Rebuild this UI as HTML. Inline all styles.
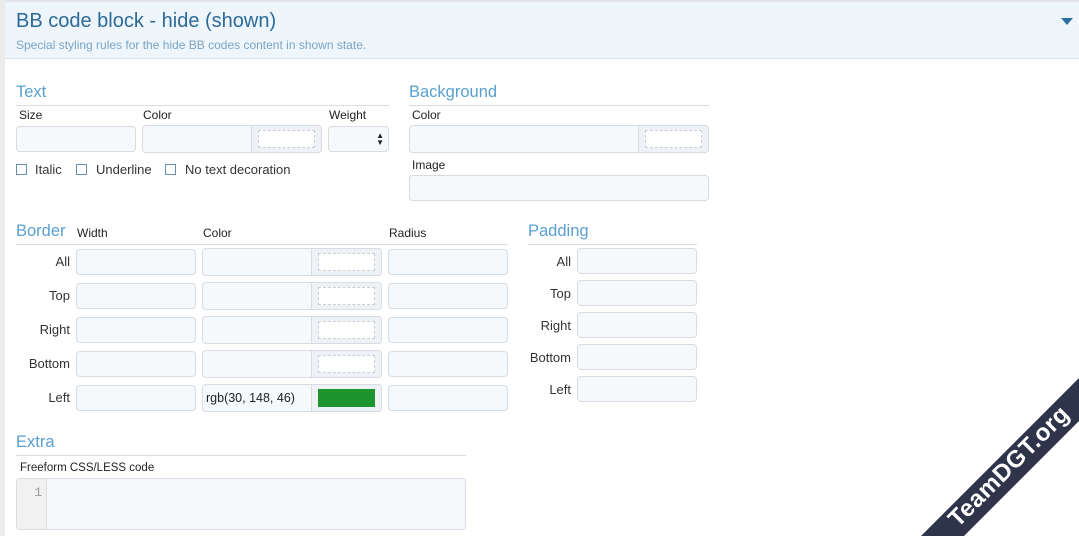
<!DOCTYPE html>
<html style="width:1079px;height:536px;overflow:hidden"><head><meta charset="utf-8"><style>
*{box-sizing:border-box;margin:0;padding:0}
body{width:1079px;height:536px;overflow:hidden;background:#fff;font-family:"Liberation Sans",sans-serif;position:relative;color:#222}
.a{position:absolute}
.hd{left:5px;top:0;width:1074px;height:59px;background:#eef5fb;border-top:2px solid #e3e5e8;border-bottom:1px solid #dbe4ec}
.side{left:0;top:0;width:5px;height:536px;background:#ececec}
.h{font-size:16.5px;color:#5aa0cf;line-height:20px}
.ln{height:1px;background:#d8dde2}
.lb{font-size:12px;color:#222;line-height:14px}
.in{background:#f6f9fc;border:1px solid #d6dce2;border-radius:4px}
.sw{position:absolute;top:0;bottom:0;right:0;background:#eef2f6;border-left:1px solid #d6dce2;border-radius:0 4px 4px 0}
.sw i{position:absolute;left:6px;right:6px;top:4px;bottom:4px;border:1px dashed #c8ced4;background:#fff}
.rl{font-size:13px;text-align:right;width:60px;line-height:16px;color:#333}
.cb{width:11px;height:11px;border:1px solid #6a8fae;background:#fff}
.ct{font-size:13px;color:#333}
</style></head><body>
<div class="a side"></div>
<div class="a hd"></div>
<div class="a" style="left:16px;top:10px;font-size:20px;color:#2d6a98">BB code block - hide (shown)</div>
<div class="a" style="left:16px;top:38px;font-size:12px;color:#7ba4c4">Special styling rules for the hide BB codes content in shown state.</div>
<div class="a" style="left:1061px;top:18px;width:0;height:0;border-left:6px solid transparent;border-right:6px solid transparent;border-top:7px solid #2c6fa3"></div>

<div class="a h" style="left:16px;top:82px">Text</div>
<div class="a ln" style="left:16px;top:105px;width:373px"></div>
<div class="a lb" style="left:19px;top:108px">Size</div>
<div class="a lb" style="left:143px;top:108px">Color</div>
<div class="a lb" style="left:329px;top:108px">Weight</div>
<div class="a in" style="left:16px;top:126px;width:120px;height:26px"></div>
<div class="a in" style="left:142px;top:125px;width:180px;height:28px"><div class="sw" style="width:70px"><i></i></div></div>
<div class="a in" style="left:328px;top:126px;width:61px;height:26px"><span style="position:absolute;right:4px;top:5px;font-size:8px;line-height:7px;color:#222">▲<br>▼</span></div>
<div class="a cb" style="left:16px;top:164px"></div><div class="a ct" style="left:35px;top:162px">Italic</div>
<div class="a cb" style="left:76px;top:164px"></div><div class="a ct" style="left:96px;top:162px">Underline</div>
<div class="a cb" style="left:165px;top:164px"></div><div class="a ct" style="left:185px;top:162px">No text decoration</div>

<div class="a h" style="left:409px;top:82px">Background</div>
<div class="a ln" style="left:409px;top:105px;width:300px"></div>
<div class="a lb" style="left:412px;top:108px">Color</div>
<div class="a in" style="left:409px;top:125px;width:300px;height:28px"><div class="sw" style="width:70px"><i></i></div></div>
<div class="a lb" style="left:412px;top:158px">Image</div>
<div class="a in" style="left:409px;top:175px;width:300px;height:26px"></div>

<div class="a h" style="left:16px;top:221px">Border</div>
<div class="a lb" style="left:77px;top:226px">Width</div>
<div class="a lb" style="left:203px;top:226px">Color</div>
<div class="a lb" style="left:389px;top:226px">Radius</div>
<div class="a ln" style="left:16px;top:244px;width:492px"></div>

<div class="a rl" style="left:10px;top:254px">All</div>
<div class="a in" style="left:76px;top:249px;width:120px;height:26px"></div>
<div class="a in" style="left:202px;top:248px;width:180px;height:28px"><div class="sw" style="width:70px"><i></i></div></div>
<div class="a in" style="left:388px;top:249px;width:120px;height:26px"></div>

<div class="a rl" style="left:10px;top:288px">Top</div>
<div class="a in" style="left:76px;top:283px;width:120px;height:26px"></div>
<div class="a in" style="left:202px;top:282px;width:180px;height:28px"><div class="sw" style="width:70px"><i></i></div></div>
<div class="a in" style="left:388px;top:283px;width:120px;height:26px"></div>

<div class="a rl" style="left:10px;top:322px">Right</div>
<div class="a in" style="left:76px;top:317px;width:120px;height:26px"></div>
<div class="a in" style="left:202px;top:316px;width:180px;height:28px"><div class="sw" style="width:70px"><i></i></div></div>
<div class="a in" style="left:388px;top:317px;width:120px;height:26px"></div>

<div class="a rl" style="left:10px;top:356px">Bottom</div>
<div class="a in" style="left:76px;top:351px;width:120px;height:26px"></div>
<div class="a in" style="left:202px;top:350px;width:180px;height:28px"><div class="sw" style="width:70px"><i></i></div></div>
<div class="a in" style="left:388px;top:351px;width:120px;height:26px"></div>

<div class="a rl" style="left:10px;top:390px">Left</div>
<div class="a in" style="left:76px;top:385px;width:120px;height:26px"></div>
<div class="a in" style="left:202px;top:384px;width:180px;height:28px"><span style="position:absolute;left:3px;top:6px;font-size:12.5px;color:#222">rgb(30, 148, 46)</span><div class="sw" style="width:70px"><i style="background:#1e942e;border:none"></i></div></div>
<div class="a in" style="left:388px;top:385px;width:120px;height:26px"></div>

<div class="a h" style="left:528px;top:221px">Padding</div>
<div class="a ln" style="left:528px;top:244px;width:169px"></div>
<div class="a rl" style="left:511px;top:254px">All</div>
<div class="a in" style="left:577px;top:248px;width:120px;height:26px"></div>
<div class="a rl" style="left:511px;top:286px">Top</div>
<div class="a in" style="left:577px;top:280px;width:120px;height:26px"></div>
<div class="a rl" style="left:511px;top:318px">Right</div>
<div class="a in" style="left:577px;top:312px;width:120px;height:26px"></div>
<div class="a rl" style="left:511px;top:350px">Bottom</div>
<div class="a in" style="left:577px;top:344px;width:120px;height:26px"></div>
<div class="a rl" style="left:511px;top:382px">Left</div>
<div class="a in" style="left:577px;top:376px;width:120px;height:26px"></div>

<div class="a h" style="left:16px;top:432px">Extra</div>
<div class="a ln" style="left:16px;top:455px;width:450px"></div>
<div class="a lb" style="left:20px;top:461px;font-size:11.5px">Freeform CSS/LESS code</div>
<div class="a in" style="left:16px;top:478px;width:450px;height:52px;overflow:hidden"><div style="position:absolute;left:0;top:0;bottom:0;width:30px;background:#f1f1f1;border-right:1px solid #ddd;text-align:right;padding-right:4px;padding-top:6px;font-size:13px;color:#999;font-family:'Liberation Mono',monospace">1</div></div>

<svg class="a" style="left:880px;top:370px" width="199" height="166" viewBox="880 370 199 166"><polygon points="921,536 1079,378 1079,421 964,536" fill="#2e3449"/></svg>
<div class="a" style="left:929px;top:451px;width:160px;height:31px;transform:rotate(-45deg);color:#fff;font-weight:bold;font-size:24px;line-height:31px;text-align:center;letter-spacing:0.5px;white-space:nowrap">TeamDGT.org</div>
</body></html>
